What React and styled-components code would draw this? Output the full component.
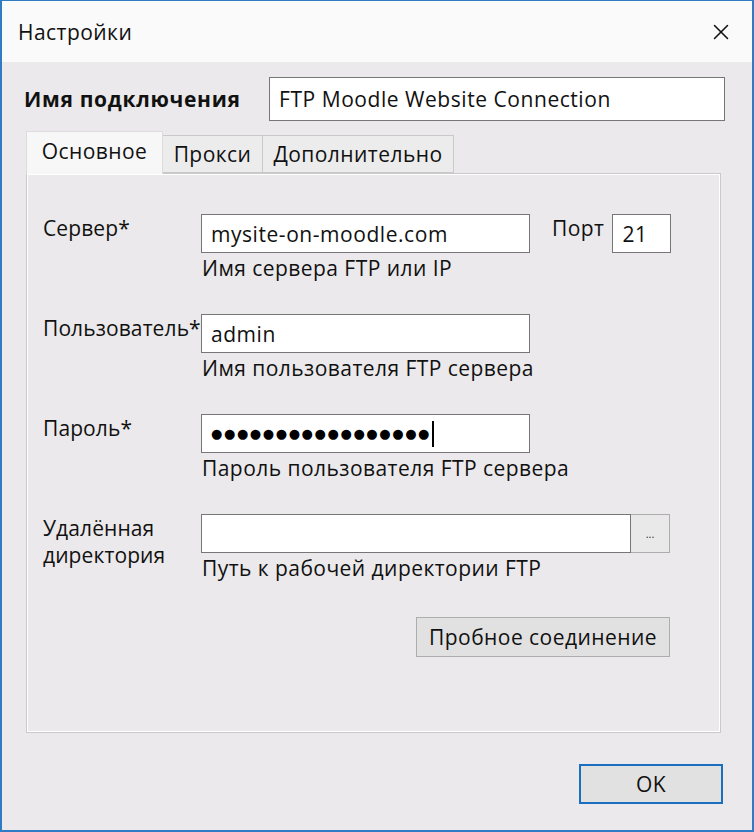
import React from 'react';
import styled, { createGlobalStyle } from 'styled-components';
import { X } from 'lucide-react';

const Global = createGlobalStyle`
  html, body {
    margin: 0;
    padding: 0;
    background: #ebe9eb;
  }
  * {
    box-sizing: border-box;
  }
`;

const Window = styled.div`
  width: 754px;
  height: 832px;
  display: flex;
  flex-direction: column;
  border: 2px solid #2f7cc4;
  border-top-width: 1px;
  font-family: 'Open Sans', 'Noto Sans', sans-serif;
  font-size: 21px;
  letter-spacing: 0.45px;
  color: #111;
  background: #ebe9eb;
`;

const TitleBar = styled.div`
  height: 61px;
  display: flex;
  align-items: center;
  justify-content: space-between;
  padding: 0 18px 0 16px;
  background: #fafafa;
`;

const Title = styled.span`
  font-size: 21px;
  color: #111;
`;

const Body = styled.div`
  flex: 1;
  display: flex;
  flex-direction: column;
  padding: 15px 27px 0 22px;
`;

const NameRow = styled.div`
  display: flex;
  align-items: center;
`;

const NameLabel = styled.label`
  width: 245px;
  font-weight: 700;
  font-size: 21px;
  letter-spacing: 0.7px;
`;

const TextBox = styled.div`
  width: ${p => p.w}px;
  height: ${p => p.h || 39}px;
  background: #fff;
  border: 1px solid #767676;
  display: flex;
  align-items: center;
  padding-left: 9px;
  font-size: 21px;
  letter-spacing: 0.55px;
  color: #111;
  white-space: nowrap;
`;

const TabStrip = styled.div`
  display: flex;
  align-items: flex-end;
  margin: 9px 0 0 2px;
  height: 43px;
`;

const Tab = styled.div`
  width: ${p => p.w}px;
  height: ${p => (p.active ? 43 : 38)}px;
  display: flex;
  align-items: center;
  justify-content: center;
  background: ${p => (p.active ? '#f7f7f7' : '#ececec')};
  border: 1px solid ${p => (p.active ? '#dcdcdc' : '#c9c9c9')};
  border-bottom: ${p => (p.active ? 'none' : '1px solid #c9c9c9')};
  margin-right: -1px;
  margin-bottom: ${p => (p.active ? '-1px' : '0')};
  position: relative;
  z-index: ${p => (p.active ? 2 : 1)};
  padding-bottom: ${p => (p.active ? 4 : 0)}px;
`;

const Panel = styled.div`
  margin-left: 2px;
  width: 695px;
  height: 560px;
  border: 1px solid #c9c9c9;
  box-shadow: inset 1px 1px 0 #fff, inset -1px -1px 0 #fff;
  padding: 40px 0 0 16px;
  display: flex;
  flex-direction: column;
`;

const FieldRow = styled.div`
  display: grid;
  grid-template-columns: 158px auto;
  margin-bottom: ${p => p.mb ?? 31}px;
`;

const FieldLabel = styled.div`
  padding-top: 1px;
  line-height: 27px;
  letter-spacing: 0.1px;
  white-space: nowrap;
`;

const FieldCol = styled.div`
  display: flex;
  flex-direction: column;
`;

const InputLine = styled.div`
  display: flex;
  align-items: flex-start;
`;

const Hint = styled.div`
  height: 30px;
  line-height: 30px;
  padding-left: 1px;
`;

const PortLabel = styled.span`
  margin: 1px 8px 0 22px;
  line-height: 26px;
`;

const BrowseButton = styled.div`
  width: 39px;
  height: 39px;
  background: #e9e9e9;
  border: 1px solid #adadad;
  border-left: none;
  display: flex;
  align-items: center;
  justify-content: center;
  font-size: 11px;
  letter-spacing: 0;
  color: #333;
`;

const Dots = styled.span`
  font-family: 'DejaVu Sans', sans-serif;
  font-size: 13px;
  letter-spacing: 1.6px;
  color: #000;
`;

const Caret = styled.span`
  display: inline-block;
  width: 2px;
  height: 26px;
  background: #000;
  margin-left: 1px;
`;

const ActionRow = styled.div`
  display: flex;
  justify-content: flex-end;
  width: 627px;
`;

const Button = styled.div`
  width: ${p => p.w}px;
  height: 40px;
  display: flex;
  align-items: center;
  justify-content: center;
  background: #e1e1e1;
  border: ${p => (p.primary ? '2px solid #1a6fc0' : '1px solid #adadad')};
  color: #111;
`;

const Footer = styled.div`
  display: flex;
  justify-content: flex-end;
  padding: 31px 2px 0 0;
`;

export default function App() {
  return (
    <>
      <Global />
      <Window>
        <TitleBar>
          <Title>Настройки</Title>
          <X size={26} strokeWidth={1.4} color="#111" />
        </TitleBar>
        <Body>
          <NameRow>
            <NameLabel>Имя подключения</NameLabel>
            <TextBox w={456} h={44}>FTP Moodle Website Connection</TextBox>
          </NameRow>
          <TabStrip>
            <Tab active w={137}>Основное</Tab>
            <Tab w={101}>Прокси</Tab>
            <Tab w={192}>Дополнительно</Tab>
          </TabStrip>
          <Panel>
            <FieldRow>
              <FieldLabel>Сервер*</FieldLabel>
              <FieldCol>
                <InputLine>
                  <TextBox w={329}>mysite-on-moodle.com</TextBox>
                  <PortLabel>Порт</PortLabel>
                  <TextBox w={59}>21</TextBox>
                </InputLine>
                <Hint>Имя сервера FTP или IP</Hint>
              </FieldCol>
            </FieldRow>
            <FieldRow>
              <FieldLabel>Пользователь*</FieldLabel>
              <FieldCol>
                <TextBox w={329}>admin</TextBox>
                <Hint>Имя пользователя FTP сервера</Hint>
              </FieldCol>
            </FieldRow>
            <FieldRow>
              <FieldLabel>Пароль*</FieldLabel>
              <FieldCol>
                <TextBox w={329}>
                  <Dots>{'●'.repeat(17)}</Dots>
                  <Caret />
                </TextBox>
                <Hint>Пароль пользователя FTP сервера</Hint>
              </FieldCol>
            </FieldRow>
            <FieldRow mb={34}>
              <FieldLabel>Удалённая<br />директория</FieldLabel>
              <FieldCol>
                <InputLine>
                  <TextBox w={430} />
                  <BrowseButton>...</BrowseButton>
                </InputLine>
                <Hint>Путь к рабочей директории FTP</Hint>
              </FieldCol>
            </FieldRow>
            <ActionRow>
              <Button w={254}>Пробное соединение</Button>
            </ActionRow>
          </Panel>
          <Footer>
            <Button w={144} primary>OK</Button>
          </Footer>
        </Body>
      </Window>
    </>
  );
}
